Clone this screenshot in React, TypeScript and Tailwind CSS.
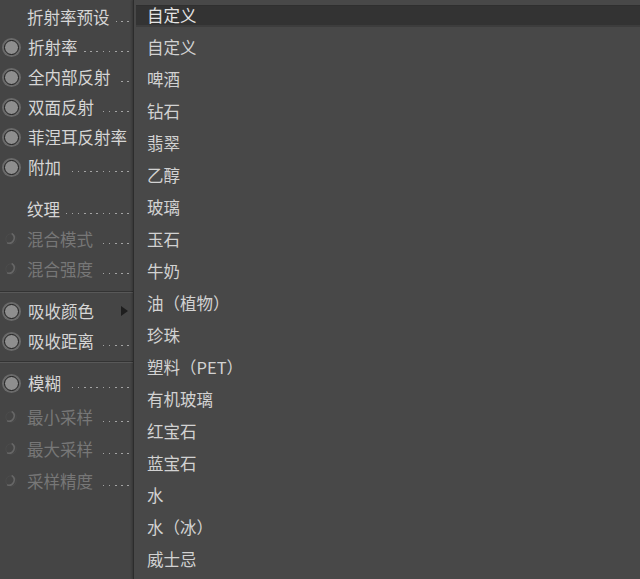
import React from "react";

type Row = {
  label: string;
  radio?: "on" | "off" | "none";
  dim?: boolean;
  dots?: boolean;
  arrow?: boolean;
  h: number;
};

const FONT = { fontFamily: '"Noto Sans CJK SC", "Noto Sans", sans-serif' };

const PRESETS = [
  "自定义",
  "啤酒",
  "钻石",
  "翡翠",
  "乙醇",
  "玻璃",
  "玉石",
  "牛奶",
  "油（植物）",
  "珍珠",
  "塑料（PET）",
  "有机玻璃",
  "红宝石",
  "蓝宝石",
  "水",
  "水（冰）",
  "威士忌",
];

function Radio({ kind }: { kind: "on" | "off" | "none" }) {
  if (kind === "none") return <span className="w-[18px] shrink-0" />;
  if (kind === "off")
    return (
      <span className="flex w-[18px] shrink-0 items-center justify-center">
        <svg width="16" height="16" viewBox="0 0 16 16">
          <circle cx="8" cy="8" r="5.2" fill="none" stroke="#4d4d4d" strokeWidth="0.8" />
          <path d="M9.2 2.9 A5.2 5.2 0 0 1 4.6 12" fill="none" stroke="#666666" strokeWidth="1.6" strokeLinecap="round" />
        </svg>
      </span>
    );
  return (
    <span className="flex size-[19px] shrink-0 items-center justify-center rounded-full bg-[#6a6a6a]">
      <span className="size-[15px] rounded-full border-[1.5px] border-[#1c1c1c] bg-[#8e8e8e]" />
    </span>
  );
}

function Leader() {
  return (
    <span className="ml-[6px] mt-[9px] h-[1.5px] min-w-0 flex-1 bg-[repeating-linear-gradient(to_left,#a4a4a4_0px,#a4a4a4_1.6px,transparent_1.6px,transparent_6.2px)]" />
  );
}

function LeftRow({ row }: { row: Row }) {
  return (
    <div className="flex items-center pl-[2px] pr-[4px]" style={{ height: row.h }}>
      <Radio kind={row.radio ?? "none"} />
      <span
        className={`ml-[7px] shrink-0 whitespace-nowrap text-[16.5px] leading-none ${
          row.dim ? "text-[#777777]" : "text-[#d6d6d6]"
        }`}
      >
        {row.label}
      </span>
      {row.dots && <Leader />}
      {row.arrow && (
        <span className="ml-auto mr-[1px] h-0 w-0 border-y-[5px] border-l-[7px] border-y-transparent border-l-[#1e1e1e]" />
      )}
    </div>
  );
}

function Divider() {
  return <div className="h-[2px] border-t border-[#333333] border-b border-b-[#585858]" />;
}

export default function App() {
  const group1: Row[] = [
    { label: "折射率预设", dots: true, h: 30 },
    { label: "折射率", radio: "on", dots: true, h: 30 },
    { label: "全内部反射", radio: "on", dots: true, h: 30 },
    { label: "双面反射", radio: "on", dots: true, h: 30 },
    { label: "菲涅耳反射率", radio: "on", h: 30 },
    { label: "附加", radio: "on", dots: true, h: 30 },
  ];
  const group2: Row[] = [
    { label: "纹理", dots: true, h: 30 },
    { label: "混合模式", radio: "off", dim: true, dots: true, h: 30 },
    { label: "混合强度", radio: "off", dim: true, dots: true, h: 30 },
  ];
  const group3: Row[] = [
    { label: "吸收颜色", radio: "on", arrow: true, h: 30 },
    { label: "吸收距离", radio: "on", dots: true, h: 30 },
  ];
  const group4: Row[] = [{ label: "模糊", radio: "on", dots: true, h: 30 }];
  const group5: Row[] = [
    { label: "最小采样", radio: "off", dim: true, dots: true, h: 32 },
    { label: "最大采样", radio: "off", dim: true, dots: true, h: 32 },
    { label: "采样精度", radio: "off", dim: true, dots: true, h: 32 },
  ];

  return (
    <div className="flex h-[579px] w-[640px] overflow-hidden bg-[#454545]" style={FONT}>
      {/* Attribute panel */}
      <div className="flex w-[133px] shrink-0 flex-col pt-[2px]">
        {group1.map((r) => (
          <LeftRow key={r.label} row={r} />
        ))}
        <div className="h-[12px]" />
        {group2.map((r) => (
          <LeftRow key={r.label} row={r} />
        ))}
        <div className="h-[7px]" />
        <Divider />
        <div className="h-[3px]" />
        {group3.map((r) => (
          <LeftRow key={r.label} row={r} />
        ))}
        <div className="h-[5px]" />
        <Divider />
        <div className="h-[5px]" />
        {group4.map((r) => (
          <LeftRow key={r.label} row={r} />
        ))}
        <div className="h-[3px]" />
        {group5.map((r) => (
          <LeftRow key={r.label} row={r} />
        ))}
      </div>

      {/* Preset dropdown */}
      <div className="flex flex-1 flex-col border-l border-[#2c2c2c] bg-[#484848] shadow-[-1px_0_2px_rgba(0,0,0,0.25)]">
        <div className="flex h-[31px] shrink-0 items-start pl-[2px]">
          <div className="mt-[5px] flex h-[22px] w-full items-center border-t border-[#2f2f2f] border-b-2 border-b-[#3d3d3d] bg-[#333333] pl-[11px] text-[16.5px] leading-none text-[#e4e4e4]">
            自定义
          </div>
        </div>
        {PRESETS.map((p) => (
          <div key={p} className="flex h-[32px] shrink-0 items-center pl-[13px] text-[16.5px] leading-none text-[#d2d2d2]">
            {p}
          </div>
        ))}
      </div>
    </div>
  );
}
